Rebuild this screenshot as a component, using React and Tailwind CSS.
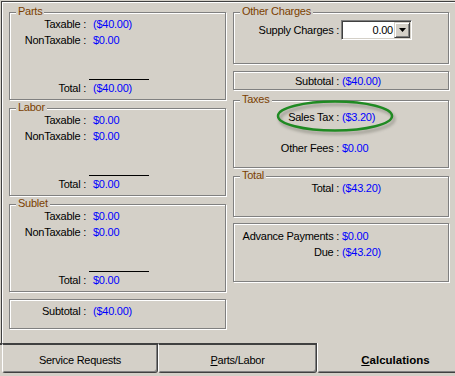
import React from "react";

const BG = "bg-[#d4d0c8]";

function Group({ label, className = "", children }) {
  return (
    <div
      className={`relative shrink-0 border border-[#808080] shadow-[inset_1px_1px_0_#fff,1px_1px_0_#fff] ${className}`}
    >
      {label && (
        <span className="absolute -top-[8px] left-[6px] px-[2px] bg-[#d4d0c8] text-[#7b3f00] leading-[12px]">
          {label}
        </span>
      )}
      {children}
    </div>
  );
}

function LRow({ l, v }) {
  return (
    <div className="flex h-4 leading-4 whitespace-pre">
      <span className="w-[76px] text-right">{l}</span>
      <span className="ml-[7px] text-[#0000ff]">{v}</span>
    </div>
  );
}

function RRow({ l, v, className = "" }) {
  return (
    <div className={`flex h-4 leading-4 whitespace-pre ${className}`}>
      <span className="w-[105px] text-right">{l}</span>
      <span className="ml-[3px] text-[#0000ff]">{v}</span>
    </div>
  );
}

function MoneyGroup({ label, taxable, nontax, total, className = "" }) {
  return (
    <Group label={label} className={`h-[88px] flex flex-col pt-[3px] pb-[3px] ${className}`}>
      <LRow l="Taxable :" v={taxable} />
      <LRow l="NonTaxable :" v={nontax} />
      <div className="flex-1" />
      <div className="ml-[79px] w-[60px] h-px bg-black" />
      <LRow l="Total :" v={total} />
    </Group>
  );
}

function Combo() {
  return (
    <div className="ml-[2px] w-[71px] h-[20px] border border-t-[#808080] border-l-[#808080] border-b-white border-r-white shadow-[inset_1px_1px_0_#404040,inset_-1px_-1px_0_#d4d0c8] p-[1px] flex">
      <div className="flex-1 bg-white text-right pr-[1px] leading-[16px]">0.00</div>
      <div className="w-[16px] h-[16px] bg-[#d4d0c8] border border-t-[#d4d0c8] border-l-[#d4d0c8] border-b-[#404040] border-r-[#404040] shadow-[inset_1px_1px_0_#fff,inset_-1px_-1px_0_#808080] flex items-center justify-center">
        <svg width="7" height="4" viewBox="0 0 7 4">
          <polygon points="0,0 7,0 3.5,4" fill="#000" />
        </svg>
      </div>
    </div>
  );
}

export default function App() {
  return (
    <div
      className={`w-[455px] h-[376px] ${BG} flex flex-col overflow-hidden text-[11px] tracking-[-0.25px] text-black font-['Liberation_Sans',Arial,sans-serif]`}
    >
      <div className="mt-px ml-px h-[342px] border-t border-l border-[#404040] shadow-[inset_1px_1px_0_#fff] pt-[10px] pl-[7px] flex shrink-0">
        {/* Left column */}
        <div className="w-[217px] flex flex-col shrink-0">
          <MoneyGroup label="Parts" taxable="($40.00)" nontax="$0.00" total="($40.00)" />
          <MoneyGroup label="Labor" taxable="$0.00" nontax="$0.00" total="$0.00" className="mt-[8px]" />
          <MoneyGroup label="Sublet" taxable="$0.00" nontax="$0.00" total="$0.00" className="mt-[8px]" />
          <Group className="mt-[7px] h-[30px] pt-[3px]">
            <LRow l="Subtotal :" v="($40.00)" />
          </Group>
        </div>

        {/* Right column */}
        <div className="ml-[7px] w-[216px] flex flex-col shrink-0">
          <Group label="Other Charges" className="h-[52px] pt-[7px]">
            <div className="flex items-center">
              <span className="w-[105px] text-right leading-4 whitespace-pre">Supply Charges :</span>
              <Combo />
            </div>
          </Group>
          <Group className="mt-[7px] h-[19px] flex items-center">
            <RRow l="Subtotal :" v="($40.00)" />
          </Group>
          <Group label="Taxes" className="mt-[10px] h-[68px] pt-[8px]">
            <svg
              className="absolute left-[39px] -top-[3px] overflow-visible"
              width="124"
              height="40"
              viewBox="0 0 124 40"
            >
              <defs>
                <filter id="blur" x="-20%" y="-50%" width="140%" height="200%">
                  <feGaussianBlur stdDeviation="1.5" />
                </filter>
              </defs>
              <ellipse cx="64" cy="21" rx="57" ry="14.5" fill="none" stroke="#7a7a70" strokeWidth="3" opacity="0.55" filter="url(#blur)" />
              <ellipse cx="62" cy="18" rx="57" ry="14.5" fill="none" stroke="#1f8a22" strokeWidth="2.5" />
            </svg>
            <RRow l="Sales Tax :" v="($3.20)" className="relative" />
            <RRow l="Other Fees :" v="$0.00" className="mt-[15px]" />
          </Group>
          <Group label="Total" className="mt-[8px] h-[41px] pt-[3px]">
            <RRow l="Total :" v="($43.20)" />
          </Group>
          <Group className="mt-[6px] h-[59px] pt-[4px]">
            <RRow l="Advance Payments :" v="$0.00" />
            <RRow l="Due :" v="($43.20)" />
          </Group>
        </div>
      </div>

      {/* Tabs */}
      <div className="flex items-start h-[33px] shrink-0">
        <div className="w-[2px] shrink-0 border-t-2 border-[#404040]" />
        <div className="w-[156px] h-[30px] shrink-0 border-t-2 border-l border-r border-b border-t-[#404040] border-l-white border-r-[#404040] border-b-[#404040] rounded-b-[3px] shadow-[inset_-1px_-1px_0_#808080] text-center pt-[7px] leading-4">
          Service Requests
        </div>
        <div className="w-[159px] h-[30px] shrink-0 border-t-2 border-l border-r border-b border-t-[#404040] border-l-white border-r-[#404040] border-b-[#404040] rounded-b-[3px] shadow-[inset_-1px_-1px_0_#808080] text-center pt-[7px] leading-4">
          <span className="underline underline-offset-1">P</span>arts/Labor
        </div>
        <div className="w-[157px] h-[30px] shrink-0 border-l border-r border-b border-l-white border-r-[#404040] border-b-[#404040] rounded-b-[3px] shadow-[inset_-1px_-1px_0_#808080] text-center pt-[9px] leading-4 font-bold text-[11.5px] tracking-normal">
          <span className="underline underline-offset-1">C</span>alculations
        </div>
      </div>
    </div>
  );
}
